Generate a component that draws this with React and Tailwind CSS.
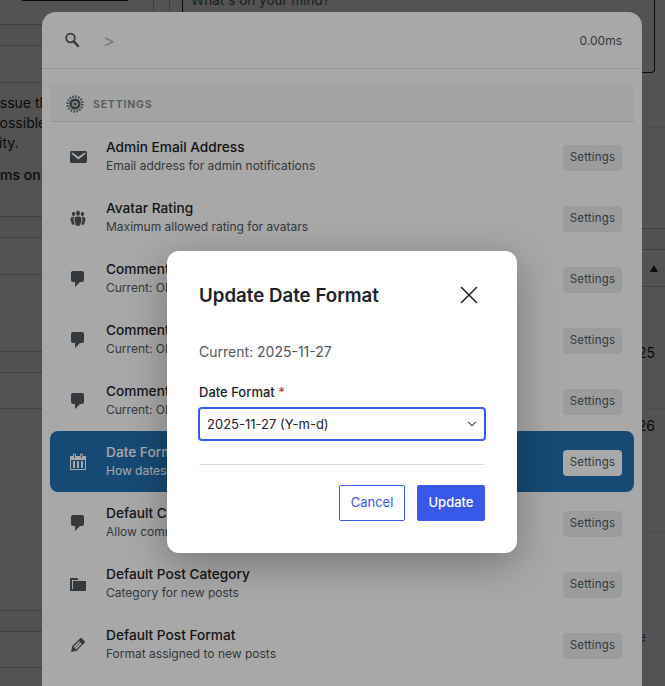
import React from 'react';
import { ChevronDown, X } from 'lucide-react';

const ICONS = {
  email:
    'M3.87 4h13.25C18.37 4 19 4.59 19 5.79v8.42c0 1.19-.63 1.79-1.88 1.79H3.87c-1.25 0-1.88-.6-1.88-1.79V5.79c0-1.2.63-1.79 1.88-1.79zm6.62 8.6l6.74-5.53c.24-.2.43-.66.13-1.07-.29-.41-.82-.42-1.17-.17l-5.7 3.86L4.8 5.83c-.35-.25-.88-.24-1.17.17-.3.41-.11.87.13 1.07z',
  groups:
    'M8.03 4.46c-.29 1.28.55 3.46 1.97 3.46 1.41 0 2.25-2.18 1.96-3.46-.22-.98-1.08-1.63-1.96-1.63-.89 0-1.74.65-1.97 1.63zm-4.13.9c-.25 1.08.47 2.93 1.67 2.93s1.92-1.85 1.67-2.93c-.19-.83-.92-1.39-1.67-1.39s-1.48.56-1.67 1.39zm8.86 0c-.25 1.08.47 2.93 1.66 2.93 1.2 0 1.92-1.85 1.67-2.93-.19-.83-.92-1.39-1.67-1.39-.74 0-1.47.56-1.66 1.39zm-.59 11.43l1.25-4.3C14.2 10 12.71 8.47 10 8.47c-2.72 0-4.21 1.53-3.44 4.02l1.26 4.3C8.05 17.51 9 18 10 18c.98 0 1.94-.49 2.17-1.21zm-6.1-7.63c-.49.67-.96 1.83-.42 3.59l1.12 3.79c-.34.2-.77.31-1.2.31-.85 0-1.65-.41-1.85-1.03l-1.07-3.65c-.65-2.11.61-3.4 2.92-3.4.27 0 .54.02.79.06-.1.1-.2.22-.29.33zm8.35-.39c2.31 0 3.58 1.29 2.92 3.4l-1.07 3.65c-.2.62-1 1.03-1.85 1.03-.43 0-.86-.11-1.2-.31l1.11-3.77c.55-1.78.08-2.94-.42-3.61-.08-.11-.18-.23-.28-.33.25-.04.51-.06.79-.06z',
  comment:
    'M5 2h9c1.1 0 2 .9 2 2v7c0 1.1-.9 2-2 2h-2l-5 5v-5H5c-1.1 0-2-.9-2-2V4c0-1.1.9-2 2-2z',
  calendar:
    'M15 4h3v14H2V4h3V3c0-.83.67-1.5 1.5-1.5S8 2.17 8 3v1h4V3c0-.83.67-1.5 1.5-1.5S15 2.17 15 3v1zM6 3v2.5c0 .28.22.5.5.5s.5-.22.5-.5V3c0-.28-.22-.5-.5-.5S6 2.72 6 3zm7 0v2.5c0 .28.22.5.5.5s.5-.22.5-.5V3c0-.28-.22-.5-.5-.5s-.5.22-.5.5zm4 14V8H3v9h14zM7 16V9H5v7h2zm4 0V9H9v7h2zm4 0V9h-2v7h2z',
  category: 'M5 7h13v10H2V4h7l2 2H4v9h1V7z',
  edit:
    'M13.89 3.39l2.71 2.72c.46.46.42 1.24.03 1.64l-8.01 8.02-5.56 1.16 1.16-5.58s7.6-7.63 7.99-8.03c.39-.39 1.22-.39 1.68.07zm-2.73 2.79l-5.59 5.61 1.11 1.11 5.54-5.65zm-2.97 8.23l5.58-5.6-1.07-1.08-5.59 5.6z',
};

const SETTINGS = [
  { icon: 'email', title: 'Admin Email Address', desc: 'Email address for admin notifications' },
  { icon: 'groups', title: 'Avatar Rating', desc: 'Maximum allowed rating for avatars' },
  { icon: 'comment', title: 'Comment Moderation', desc: 'Current: ON' },
  { icon: 'comment', title: 'Comment Notifications', desc: 'Current: ON' },
  { icon: 'comment', title: 'Comment Registration', desc: 'Current: ON' },
  { icon: 'calendar', title: 'Date Format', desc: 'How dates are displayed', active: true },
  { icon: 'comment', title: 'Default Comment Status', desc: 'Allow comments on new posts' },
  { icon: 'category', title: 'Default Post Category', desc: 'Category for new posts' },
  { icon: 'edit', title: 'Default Post Format', desc: 'Format assigned to new posts' },
];

function Dashicon({ name }) {
  return (
    <svg viewBox="0 0 20 20" className="w-5 h-5 shrink-0 fill-current" aria-hidden="true">
      <path d={ICONS[name]} />
    </svg>
  );
}

function SettingRow({ icon, title, desc, active }) {
  return (
    <div className={`flex items-center h-[61px] pl-[18px] pr-3 gap-[18px] rounded-lg ${active ? 'bg-[#2271b1] text-white' : 'text-[#1d2327]'}`}>
      <span className={active ? 'text-white' : 'text-[#50575e]'}>
        <Dashicon name={icon} />
      </span>
      <div className="flex-1 min-w-0 mb-[2px]">
        <div className="text-[13.7px] font-medium leading-[19px]">{title}</div>
        <div className={`text-xs leading-[17px] ${active ? 'text-white' : 'text-[#50575e]'}`}>{desc}</div>
      </div>
      <button className={`mt-[2px] h-[26px] w-[59px] rounded text-[11.5px] tracking-[0.2px] text-[#50575e] ${active ? 'bg-white' : 'bg-[#ededed]'}`}>
        Settings
      </button>
    </div>
  );
}

// the page behind the dialogs, only its edges are visible
function BackgroundPage() {
  return (
    <div className="flex h-full bg-white text-[#1d2327] text-sm">
      <div className="w-[153px] shrink-0 flex flex-col">
        <div className="h-[25px] border-b border-[#c3c4c7] flex justify-end">
          <div className="w-[106px] h-[1px] mr-[25px] bg-[#1d2327]" />
        </div>
        <div className="h-[21px] border-b border-[#c3c4c7] bg-[#f6f7f7]" />
        <div className="h-[37px] border-b border-[#c3c4c7]" />
        <div className="h-[134px] border-b border-[#c3c4c7] pt-[10px] whitespace-nowrap overflow-hidden leading-[20px]">
          <p className="-ml-[4px]">Issue the</p>
          <p className="-ml-[9px]">possible</p>
          <p className="-ml-[1px]">ity.</p>
          <p className="mt-3 font-medium">ms on the</p>
        </div>
        <div className="h-[21px] border-b border-[#c3c4c7] bg-[#f6f7f7]" />
        <div className="h-[37px] border-b border-[#c3c4c7]" />
        <div className="h-[77px] border-b border-[#c3c4c7]" />
        <div className="h-[21px] border-b border-[#c3c4c7] bg-[#f6f7f7]" />
        <div className="h-[36px] border-b border-[#c3c4c7]" />
        <div className="h-[202px] border-b border-[#c3c4c7]" />
        <div className="h-[21px] border-b border-[#c3c4c7] bg-[#f6f7f7]" />
        <div className="h-[36px] border-b border-[#c3c4c7]" />
      </div>
      <div className="w-[17px] shrink-0 border-x border-[#c3c4c7]" />
      <div className="flex-1 flex flex-col">
        <div className="h-[78px] -mt-[5px] ml-[12px] mr-[10px] border-x border-b border-[#1d2327] rounded-br pl-[8px] overflow-hidden text-[13.5px] text-[#50575e]">
          <div className="-mt-[5px] leading-[20px]">What's on your mind?</div>
        </div>
        <div className="h-[55px] border-b border-[#e8e8e8]" />
        <div className="h-[101px] border-b border-[#c3c4c7]" />
        <div className="h-[21px] border-b border-[#c3c4c7] bg-[#f6f7f7]" />
        <div className="h-[37px] border-b border-[#c3c4c7] flex items-center justify-end pr-[7px]">
          <svg viewBox="0 0 8 7" className="w-2 h-[7px] fill-[#1d2327]" aria-hidden="true">
            <path d="M4 0l4 7H0z" />
          </svg>
        </div>
        <div className="h-[122px] border-b border-[#e8e8e8] pt-[56px] leading-[20px] text-right pr-[10px]">25</div>
        <div className="h-[124px] border-b border-[#e8e8e8] pt-[7px] leading-[20px] text-right pr-[10px]">26</div>
        <div className="pt-[94px] leading-[20px] text-right pr-[19px] text-[#2271b1]">e</div>
      </div>
    </div>
  );
}

function CommandPalette() {
  return (
    <div className="absolute left-[42px] top-[12px] w-[600px] h-[720px] bg-white rounded-t-[14px]">
      <div className="flex items-center h-[57px] pl-[22px] pr-5 border-b border-[#e2e4e7]">
        <svg viewBox="0 0 16 16" className="w-4 h-4 text-[#50575e]" aria-hidden="true">
          <circle cx="6.5" cy="6" r="4.3" fill="none" stroke="currentColor" strokeWidth="1.8" />
          <path d="M9.7 9.4l4.4 4.6" stroke="currentColor" strokeWidth="2.4" strokeLinecap="round" />
        </svg>
        <span className="ml-[23px] mt-[2px] text-lg text-[#b4b9be]">&gt;</span>
        <span className="ml-auto mt-[2px] text-xs text-[#50575e]">0.00ms</span>
      </div>
      <div className="mx-2 mt-[15px] h-[38px] flex items-center pl-4 gap-[9px] bg-[#f6fbf8] border-b border-[#e2e4e7]">
        <svg viewBox="0 0 18 18" className="w-[18px] h-[18px] mt-[2px]" aria-hidden="true">
          <circle cx="9" cy="9" r="7.4" fill="none" stroke="#6b7074" strokeWidth="2.6" strokeDasharray="1.6 1.3" />
          <circle cx="9" cy="9" r="5.6" fill="#50575e" />
          <circle cx="9" cy="9" r="3" fill="#c9ced2" />
          <circle cx="9" cy="9" r="1.3" fill="#50575e" />
        </svg>
        <span className="mt-[4px] text-[10.5px] font-bold tracking-[0.8px] text-[#8c8f94] uppercase">Settings</span>
      </div>
      <div className="mx-2 mt-[4px]">
        {SETTINGS.map((item) => (
          <SettingRow key={item.title} {...item} />
        ))}
      </div>
    </div>
  );
}

function UpdateModal() {
  return (
    <div className="absolute left-[167px] top-[251px] w-[350px] h-[302px] bg-white rounded-xl px-8 pt-[31px] shadow-[0_10px_40px_rgba(0,0,0,0.3)]">
      <div className="flex items-center justify-between h-[26px]">
        <h2 className="mt-[2px] text-[18.7px] font-semibold text-[#1d2327]">Update Date Format</h2>
        <X className="w-[30px] h-[30px] mr-px text-[#1d2327]" strokeWidth={1.2} />
      </div>
      <p className="mt-[34px] text-sm leading-[20px] text-[#50575e]">Current: 2025-11-27</p>
      <label className="block mt-[20px] text-[13px] leading-[20px] font-medium text-[#1d2327]">
        Date Format <span className="text-[#d63638]">*</span>
      </label>
      <div className="relative mt-[6px]">
        <select
          defaultValue="Y-m-d"
          className="w-full h-[32px] pl-[7px] pt-px appearance-none text-[13px] text-[#1d2327] bg-white rounded-[3px] border border-[#3858e9] shadow-[0_0_0_1px_#3858e9] outline-none"
        >
          <option value="Y-m-d">2025-11-27 (Y-m-d)</option>
        </select>
        <ChevronDown className="absolute right-[6px] top-[9px] w-[14px] h-[14px] text-[#1d2327]" strokeWidth={1.8} />
      </div>
      <div className="mt-[24px] border-t border-[#dcdcde]" />
      <div className="mt-[20px] flex justify-end gap-3">
        <button className="h-[36px] w-[66px] text-[13px] text-[#3858e9] bg-white border border-[#3858e9] rounded-[2px]">Cancel</button>
        <button className="h-[36px] w-[68px] text-[13px] font-medium text-white bg-[#3858e9] rounded-[2px]">Update</button>
      </div>
    </div>
  );
}

export default function App() {
  return (
    <div className="relative w-[665px] h-[686px] overflow-hidden font-['Inter',sans-serif]">
      <BackgroundPage />
      <div className="absolute inset-0 bg-black/50" />
      <CommandPalette />
      <div className="absolute inset-0 bg-black/34" />
      <UpdateModal />
    </div>
  );
}
